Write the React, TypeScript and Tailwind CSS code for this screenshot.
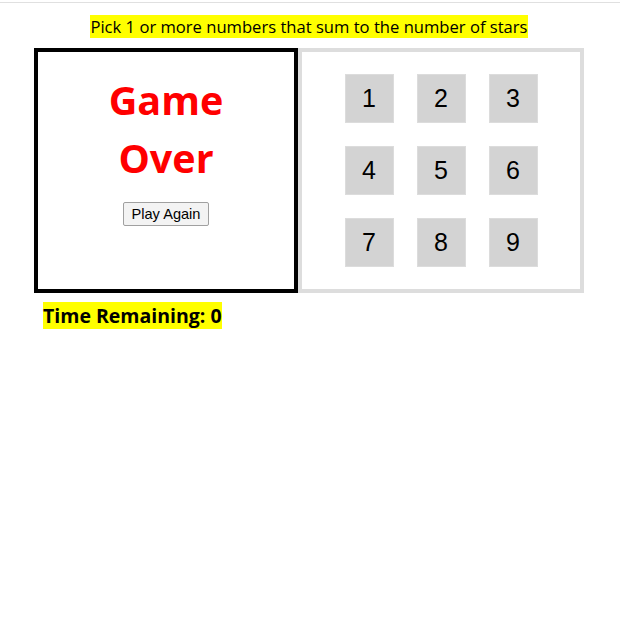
import React from "react";

export default function App() {
  const nums = [1, 2, 3, 4, 5, 6, 7, 8, 9];
  return (
    <div className="min-h-[626px] bg-white" style={{ fontFamily: '"Open Sans", sans-serif' }}>
      <div className="h-[2px]" />
      <div className="h-px bg-[#e0e0e0]" />
      <div className="ml-[34px] w-[550px]">
        <div className="flex justify-center pt-[12px] pb-[10px]">
          <span className="bg-[#ffff00] text-[16.6px] leading-[23px] text-black">
            Pick 1 or more numbers that sum to the number of stars
          </span>
        </div>
        <div className="flex">
          <div className="flex h-[245px] w-[264px] flex-col items-center border-4 border-black">
            <div className="mt-[19px] text-center text-[39.5px] font-bold leading-[58px] text-[#ff0000]">
              <div>Game</div>
              <div>Over</div>
            </div>
            <button
              className="mt-[15px] h-[24px] rounded-[2px] border border-[#a0a0a0] bg-[#f3f3f3] px-[8px] text-[14.6px] leading-[20px] text-black"
              style={{ fontFamily: '"Liberation Sans", Arial, sans-serif' }}
            >
              Play Again
            </button>
          </div>
          <div className="flex h-[245px] w-[286px] items-center justify-center border-4 border-[#dddddd]">
            <div className="grid grid-cols-3 gap-x-[23px] gap-y-[23px]">
              {nums.map((n) => (
                <button
                  key={n}
                  className="flex h-[49px] w-[49px] items-center justify-center border border-[#dcdcdc] bg-[#d3d3d3] text-[25px] text-black"
                  style={{ fontFamily: '"Liberation Sans", Arial, sans-serif' }}
                >
                  {n}
                </button>
              ))}
            </div>
          </div>
        </div>
        <div className="mt-[9px] pl-[9px]">
          <span className="bg-[#ffff00] text-[19.5px] font-bold leading-[27px] text-black">
            Time Remaining: 0
          </span>
        </div>
      </div>
    </div>
  );
}
